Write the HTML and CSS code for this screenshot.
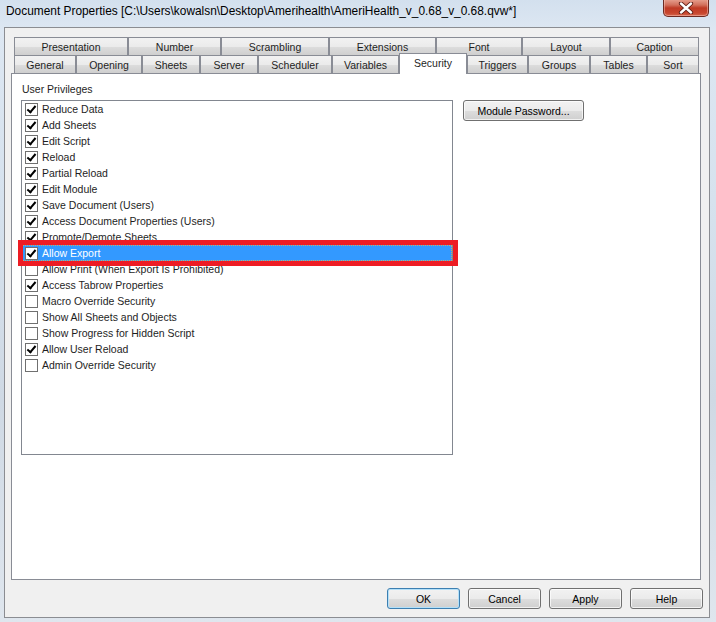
FILE: index.html
```html
<!DOCTYPE html>
<html>
<head>
<meta charset="utf-8">
<link rel="stylesheet" href="styles.css">
</head>
<body>
<div class="window">
  <div class="titlebar">
    <span class="title">Document Properties [C:\Users\kowalsn\Desktop\Amerihealth\AmeriHealth_v_0.68_v_0.68.qvw*]</span>
    <div class="close">
      <svg width="18" height="12" viewBox="0 0 18 12">
        <path d="M4 1.5 L14 10.5 M14 1.5 L4 10.5" stroke="#5a1a12" stroke-width="4.2" stroke-linecap="round"/>
        <path d="M4 1.5 L14 10.5 M14 1.5 L4 10.5" stroke="#ffffff" stroke-width="2.4" stroke-linecap="round"/>
      </svg>
    </div>
  </div>
  <div class="client">
    <div class="tabs">
      <div class="tabrow">
        <div class="tab" style="width:114px">Presentation</div>
        <div class="tab" style="width:93px">Number</div>
        <div class="tab" style="width:108px">Scrambling</div>
        <div class="tab" style="width:107px">Extensions</div>
        <div class="tab" style="width:86px">Font</div>
        <div class="tab" style="width:88px">Layout</div>
        <div class="tab" style="width:89px">Caption</div>
      </div>
      <div class="tabrow front">
        <div class="tab" style="width:62px">General</div>
        <div class="tab" style="width:66px">Opening</div>
        <div class="tab" style="width:58px">Sheets</div>
        <div class="tab" style="width:58px">Server</div>
        <div class="tab" style="width:74px">Scheduler</div>
        <div class="tab" style="width:67px">Variables</div>
        <div class="tab selected" style="width:68px">Security</div>
        <div class="tab" style="width:61px">Triggers</div>
        <div class="tab" style="width:62px">Groups</div>
        <div class="tab" style="width:57px">Tables</div>
        <div class="tab" style="width:52px">Sort</div>
      </div>
    </div>
    <div class="panel">
      <div class="leftcol">
        <div class="group-label">User Privileges</div>
        <div class="listbox">
          <div class="item"><span class="cb on"></span><span class="lbl">Reduce Data</span></div>
          <div class="item"><span class="cb on"></span><span class="lbl">Add Sheets</span></div>
          <div class="item"><span class="cb on"></span><span class="lbl">Edit Script</span></div>
          <div class="item"><span class="cb on"></span><span class="lbl">Reload</span></div>
          <div class="item"><span class="cb on"></span><span class="lbl">Partial Reload</span></div>
          <div class="item"><span class="cb on"></span><span class="lbl">Edit Module</span></div>
          <div class="item"><span class="cb on"></span><span class="lbl">Save Document (Users)</span></div>
          <div class="item"><span class="cb on"></span><span class="lbl">Access Document Properties (Users)</span></div>
          <div class="item"><span class="cb on"></span><span class="lbl">Promote/Demote Sheets</span></div>
          <div class="item sel"><span class="cb on"></span><span class="lbl">Allow Export</span></div>
          <div class="item"><span class="cb"></span><span class="lbl">Allow Print (When Export Is Prohibited)</span></div>
          <div class="item"><span class="cb on"></span><span class="lbl">Access Tabrow Properties</span></div>
          <div class="item"><span class="cb"></span><span class="lbl">Macro Override Security</span></div>
          <div class="item"><span class="cb"></span><span class="lbl">Show All Sheets and Objects</span></div>
          <div class="item"><span class="cb"></span><span class="lbl">Show Progress for Hidden Script</span></div>
          <div class="item"><span class="cb on"></span><span class="lbl">Allow User Reload</span></div>
          <div class="item"><span class="cb"></span><span class="lbl">Admin Override Security</span></div>
        </div>
      </div>
      <button class="btn module">Module Password...</button>
    </div>
    <div class="footer">
      <button class="btn default">OK</button>
      <button class="btn">Cancel</button>
      <button class="btn">Apply</button>
      <button class="btn">Help</button>
    </div>
  </div>
  <div class="annot"></div>
</div>
</body>
</html>
```
FILE: styles.css
```css
* { box-sizing: border-box; }
html, body { margin: 0; padding: 0; }
body {
  width: 716px;
  height: 622px;
  overflow: hidden;
  font-family: "Liberation Sans", Arial, sans-serif;
  font-size: 10.5px;
  color: #000;
}
.window {
  position: relative;
  width: 716px;
  height: 622px;
  background: linear-gradient(180deg, #d3e0ee 0px, #dde7f2 30px, #d6e2ee 200px, #cfd9e4 400px, #dfe6ee 622px);
  display: flex;
  flex-direction: column;
}
.titlebar {
  height: 27px;
  display: flex;
  align-items: flex-start;
  justify-content: space-between;
  padding-left: 6px;
  padding-right: 7px;
}
.title {
  font-size: 11.9px;
  line-height: 12px;
  margin-top: 5px;
  color: #000;
  white-space: nowrap;
}
.close {
  width: 46px;
  height: 18px;
  margin-top: -1px;
  border: 1px solid #6d2a22;
  border-top: none;
  border-radius: 0 0 5px 5px;
  background: linear-gradient(180deg, #e8a493 0px, #d2705c 6px, #bf3a25 9px, #c8462e 14px, #d6735a 18px);
  box-shadow: inset 0 0 0 1px rgba(255,210,200,0.45);
  display: flex;
  align-items: center;
  justify-content: center;
}
.client {
  margin-left: 4px;
  width: 706px;
  height: 591px;
  border: 1px solid #8b8d92;
  background: #f0f0f0;
  padding: 9px 0 0 6px;
  display: flex;
  flex-direction: column;
}
.tabs {
  padding-left: 3px;
  display: flex;
  flex-direction: column;
  position: relative;
  z-index: 1;
}
.tabrow {
  display: flex;
  height: 18px;
}
.tabrow.front { align-items: flex-end; }
.tab {
  height: 18px;
  border: 1px solid #898c95;
  border-bottom: none;
  background: linear-gradient(180deg, #f2f2f2 0%, #ebebeb 50%, #dddddd 51%, #cfcfcf 100%);
  display: flex;
  align-items: center;
  justify-content: center;
  color: #1e1e1e;
  font-size: 10.5px;
  padding-top: 1px;
}
.tab.selected {
  height: 21px;
  margin-bottom: -1px;
  background: #ffffff;
  align-items: flex-start;
  padding-top: 3px;
}
.panel {
  width: 690px;
  height: 507px;
  border: 1px solid #898c95;
  background: #ffffff;
  padding: 8px 0 0 9px;
  display: flex;
  align-items: flex-start;
  gap: 10px;
}
.leftcol {
  display: flex;
  flex-direction: column;
}
.group-label {
  height: 14px;
  line-height: 14px;
  margin-left: 1px;
  color: #1e1e1e;
}
.listbox {
  margin-top: 4px;
  width: 432px;
  height: 355px;
  border: 1px solid #828790;
  background: #fff;
}
.item {
  height: 16px;
  display: flex;
  align-items: center;
  padding-left: 2px;
  color: #1e1e1e;
}
.item.sel {
  background: #3399ff;
  color: #fff;
  outline: 1px dotted #c9a96b;
  outline-offset: -1px;
}
.cb {
  width: 13px;
  height: 13px;
  border: 1px solid #707070;
  background: #fff;
  margin-right: 4px;
  margin-left: 1px;
  position: relative;
}
.cb.on::after {
  content: "";
  position: absolute;
  left: 3px;
  top: 0px;
  width: 3px;
  height: 7px;
  border-right: 2px solid #000;
  border-bottom: 2px solid #000;
  transform: rotate(40deg);
}
.lbl { white-space: nowrap; }
.btn {
  font-family: "Liberation Sans", Arial, sans-serif;
  font-size: 10.5px;
  color: #000;
  height: 21px;
  border: 1px solid #707070;
  border-radius: 3px;
  background: linear-gradient(180deg, #f2f2f2 0%, #ebebeb 50%, #dddddd 51%, #cfcfcf 100%);
  box-shadow: inset 0 0 0 1px rgba(255,255,255,0.7);
  padding: 0;
}
.btn.module {
  width: 121px;
  margin-top: 18px;
}
.footer {
  display: flex;
  gap: 8px;
  justify-content: flex-end;
  padding-right: 6px;
  margin-top: 8px;
}
.footer .btn { width: 73px; }
.btn.default {
  border-color: #3c7fb1;
  box-shadow: inset 0 0 0 1px #b3e0f9;
}
.annot {
  position: absolute;
  left: 18px;
  top: 240px;
  width: 440px;
  height: 26px;
  border: 5px solid #ed1c24;
}
```
